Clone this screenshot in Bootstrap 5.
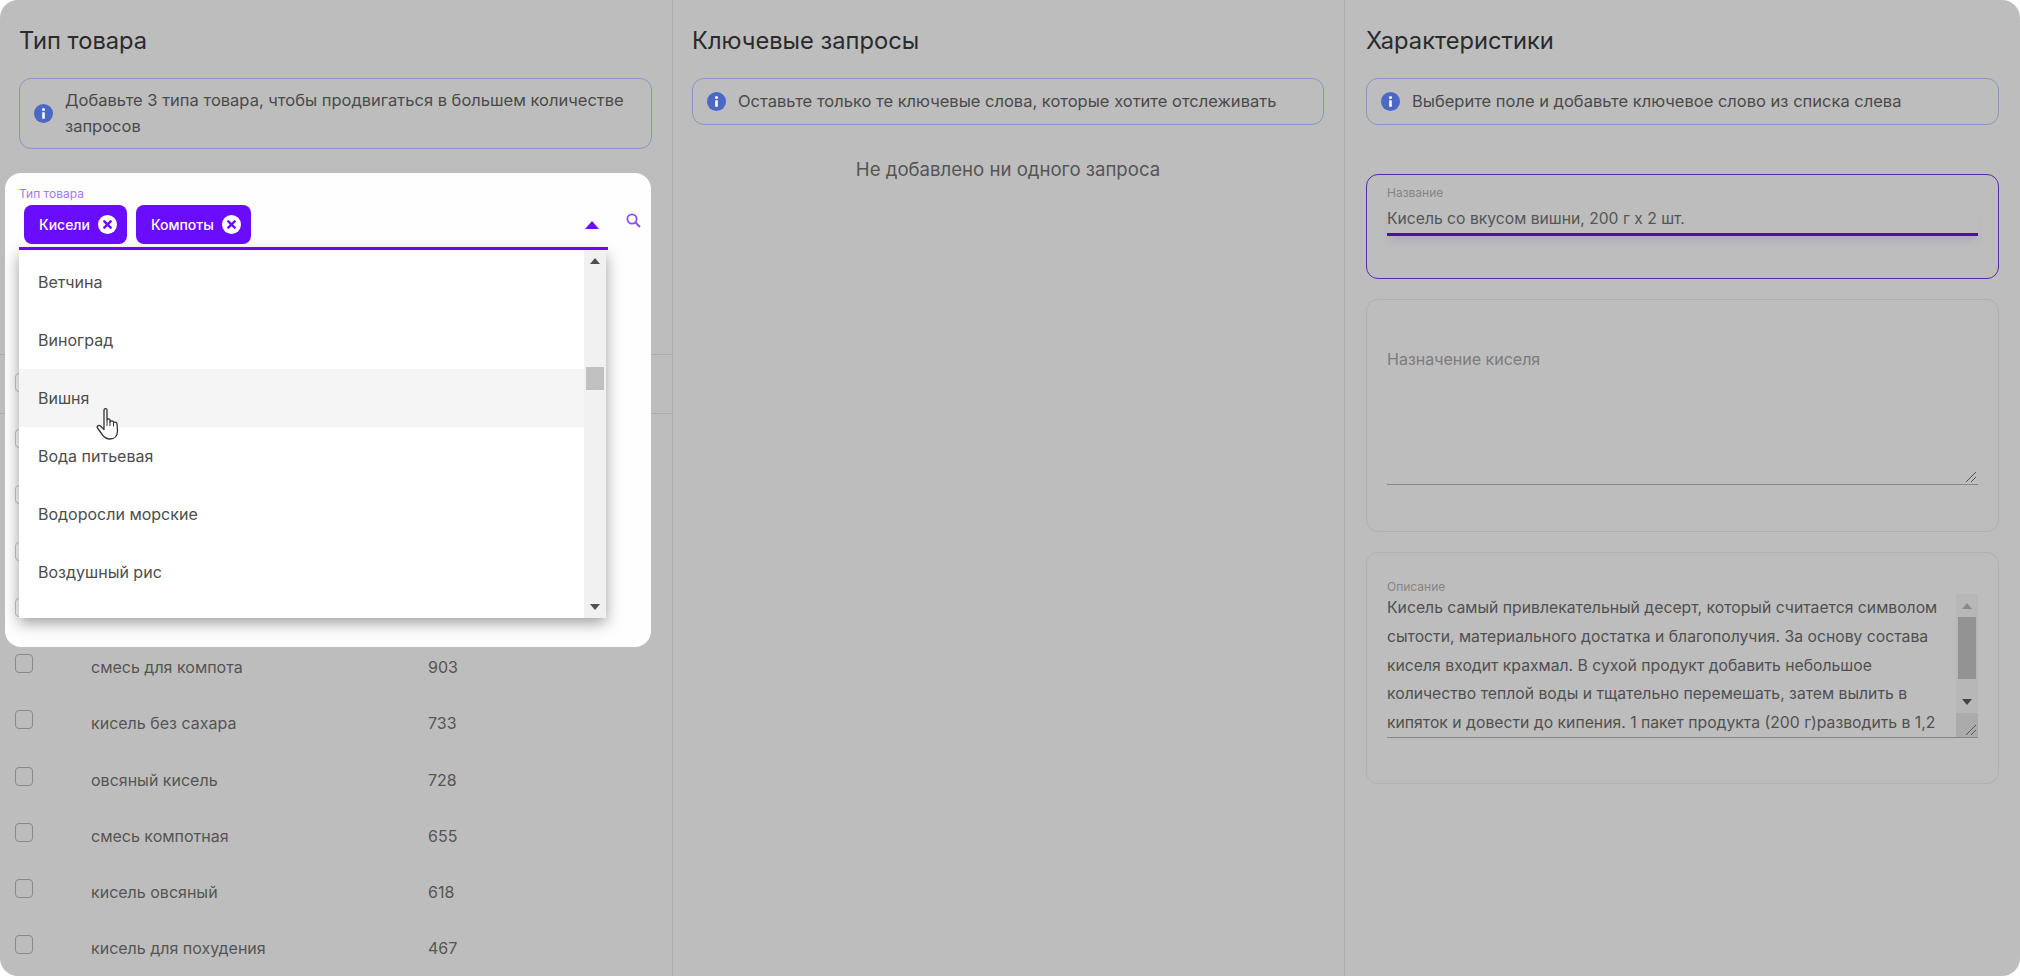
<!DOCTYPE html>
<html lang="ru">
<head>
  <meta charset="UTF-8">
  <title>Тип товара</title>
  <link href="https://cdn.jsdelivr.net/npm/bootstrap@5.3.0/dist/css/bootstrap.min.css" rel="stylesheet">
  <style>
    body {
      background: #fff;
      font-family: Inter, "Noto Sans", sans-serif;
      font-size: 16px;
      color: #4d4d4d;
      overflow: hidden;
    }

    .board {
      position: relative;
      height: 976px;
      background: #bdbdbd;
      border-radius: 18px;
      overflow: hidden;
    }

    .pane {
      height: 976px;
      padding: 26px 20px 0 19px;
      border-right: 1px solid #adadad;
    }

    .pane-left { flex: 0 0 673px; }
    .pane-mid { flex: 0 0 672px; }
    .pane-right { flex: 0 0 675px; padding: 26px 21px 0 21px; border-right: 0; }

    .pane-title {
      font-size: 23.7px;
      line-height: 30px;
      font-weight: 400;
      color: #2b2b2b;
      margin: 0 0 22px;
    }

    .hint-box {
      --bs-alert-margin-bottom: 0;
      min-height: 47px;
      padding: 8px 14px 9px;
      font-size: 16.5px;
      line-height: 26px;
      color: #4a4a4a;
      background: transparent;
      border: 1px solid #8797bd;
      border-radius: 12px;
    }

    .hint-icon { flex: 0 0 19px; width: 19px; height: 19px; }

    .empty-note {
      margin-top: 30px;
      font-size: 18.6px;
      line-height: 28px;
      text-align: center;
      color: #555;
    }

    /* keyword list behind the overlay */
    .kw-list { margin: 205px -20px 0 -19px; }
    .kw-head { height: 60px; padding: 18px 0 0 15px; border-top: 1px solid #adadad; border-bottom: 1px solid #adadad; }
    .kw-row { height: 56.25px; padding: 15px 0 0 15px; line-height: 26px; color: #555; }
    .kw-box.form-check-input {
      flex: 0 0 18px;
      width: 18px;
      height: 19px;
      margin: 0;
      background-color: transparent;
      border: 1px solid #8a8a8a;
      border-radius: 4px;
    }
    /* boxes that show through the white panel, the menu still covers them */
    .kw-box.kw-under { position: relative; z-index: 1; border-color: #c4c4c4; }
    .kw-name { width: 337px; margin-left: 58px; }

    /* white spotlight with the open select */
    .spot {
      position: absolute;
      left: 5px;
      top: 173px;
      width: 646px;
      height: 474px;
      padding: 14px 0 0 14px;
      background: rgba(255, 255, 255, .98);
      border-radius: 16px;
    }

    .spot-label { font-size: 12px; line-height: 14px; color: #a578f2; }

    .select-line {
      width: 589px;
      margin-top: 4px;
      padding: 0 0 3px 5px;
      border-bottom: 3px solid #6a0dff;
    }

    .tag-chip {
      height: 39px;
      padding: 0 10px 0 15px;
      gap: 8px;
      font-size: 14px;
      font-weight: 500;
      color: #fff;
      background: #6a0dff;
      border-radius: 8px;
    }

    .chip-x { width: 19px; height: 19px; }
    .chip-gap { gap: 9px; }
    .open-caret { width: 14px; height: 8px; margin-right: 9px; }
    .find-icon { position: absolute; left: 621px; top: 40px; width: 15px; height: 15px; }

    .pick-menu.dropdown-menu {
      left: 14px;
      top: 77px;
      width: 587px;
      height: 368px;
      padding: 0;
      margin: 0;
      border: 0;
      border-radius: 0;
      background: #fff;
      box-shadow: 0 5px 14px rgba(0, 0, 0, .38);
    }

    .pick-list { padding-top: 3px; }
    .pick-list .dropdown-item { height: 58px; padding: 16px 19px; line-height: 26px; color: #4d4d4d; }
    .pick-list .pick-hover { background: #f5f5f5; }

    .fake-bar { flex: 0 0 22px; width: 22px; background: #f1f1f1; }
    .bar-arrow { width: 10px; height: 6px; }
    .menu-thumb { position: absolute; right: 2px; top: 117px; width: 18px; height: 23px; background: #c1c1c1; }
    .hand-cursor { position: absolute; left: 77px; top: 157px; width: 25px; height: 33px; }

    /* characteristic fields */
    .spec-field {
      margin-top: 20px;
      padding: 0 20px;
      border: 1px solid #b0b0b0;
      border-radius: 12px;
    }

    .spec-title { height: 105px; margin-top: 49px; padding-top: 10px; border: 1.5px solid #5b2aa3; }
    .spec-goal { height: 233px; padding-top: 46px; }
    .spec-text { height: 232px; padding-top: 26px; }

    .spec-label { font-size: 12px; line-height: 15px; color: #858585; }

    .spec-value {
      margin-top: 6px;
      font-size: 15.7px;
      line-height: 26px;
      padding-bottom: 1px;
      color: #555;
      border-bottom: 3px solid #4a0fb0;
      box-shadow: 0 8px 8px -3px rgba(80, 40, 170, .12);
    }

    .goal-area {
      position: relative;
      height: 139px;
      line-height: 26px;
      color: #7c7c7c;
      border-bottom: 1px solid #858585;
    }

    .grip { position: absolute; right: 1px; bottom: 1px; width: 12px; height: 12px; }

    .desc-area {
      position: relative;
      height: 144px;
      font-size: 15.75px;
      line-height: 28.8px;
      color: #505050;
      white-space: nowrap;
      border-bottom: 1px solid #858585;
      overflow: hidden;
    }

    .desc-text { flex: 1 1 auto; min-width: 0; }
    .desc-bar { background: #b7b7b7; position: relative; }
    .desc-thumb { position: absolute; left: 2px; top: 23px; width: 18px; height: 62px; background: #939393; }
    .desc-arrow-up { position: absolute; left: 6px; top: 9px; }
    .desc-arrow-down { position: absolute; left: 6px; top: 105px; }
    .desc-corner { position: absolute; left: 0; bottom: 0; width: 22px; height: 24px; background: #ababab; }
  </style>
</head>
<body>
  <div class="board">
    <div class="row g-0 flex-nowrap">
      <div class="col pane pane-left">
        <h2 class="pane-title">Тип товара</h2>
        <div class="alert hint-box d-flex align-items-center gap-2 m-0" role="alert">
          <svg class="hint-icon me-1" viewBox="0 0 19 19"><circle cx="9.5" cy="9.5" r="9.5" fill="#4a68c5"/><circle cx="9.5" cy="5.6" r="1.5" fill="#fff"/><rect x="8.2" y="8.2" width="2.6" height="6.6" rx=".6" fill="#fff"/></svg>
          <div>Добавьте 3 типа товара, чтобы продвигаться в большем количестве запросов</div>
        </div>
        <div class="kw-list">
          <div class="kw-head"><input class="form-check-input kw-box kw-under" type="checkbox"></div>
          <div class="kw-row d-flex"><input class="form-check-input kw-box kw-under" type="checkbox"></div>
          <div class="kw-row d-flex"><input class="form-check-input kw-box kw-under" type="checkbox"></div>
          <div class="kw-row d-flex"><input class="form-check-input kw-box kw-under" type="checkbox"></div>
          <div class="kw-row d-flex"><input class="form-check-input kw-box kw-under" type="checkbox"></div>
          <div class="kw-row d-flex"><input class="form-check-input kw-box" type="checkbox"><span class="kw-name">смесь для компота</span><span>903</span></div>
          <div class="kw-row d-flex"><input class="form-check-input kw-box" type="checkbox"><span class="kw-name">кисель без сахара</span><span>733</span></div>
          <div class="kw-row d-flex"><input class="form-check-input kw-box" type="checkbox"><span class="kw-name">овсяный кисель</span><span>728</span></div>
          <div class="kw-row d-flex"><input class="form-check-input kw-box" type="checkbox"><span class="kw-name">смесь компотная</span><span>655</span></div>
          <div class="kw-row d-flex"><input class="form-check-input kw-box" type="checkbox"><span class="kw-name">кисель овсяный</span><span>618</span></div>
          <div class="kw-row d-flex"><input class="form-check-input kw-box" type="checkbox"><span class="kw-name">кисель для похудения</span><span>467</span></div>
        </div>
      </div>

      <div class="col pane pane-mid">
        <h2 class="pane-title">Ключевые запросы</h2>
        <div class="alert hint-box d-flex align-items-center gap-2 m-0" role="alert">
          <svg class="hint-icon me-1" viewBox="0 0 19 19"><circle cx="9.5" cy="9.5" r="9.5" fill="#4a68c5"/><circle cx="9.5" cy="5.6" r="1.5" fill="#fff"/><rect x="8.2" y="8.2" width="2.6" height="6.6" rx=".6" fill="#fff"/></svg>
          <div>Оставьте только те ключевые слова, которые хотите отслеживать</div>
        </div>
        <div class="empty-note">Не добавлено ни одного запроса</div>
      </div>

      <div class="col pane pane-right">
        <h2 class="pane-title">Характеристики</h2>
        <div class="alert hint-box d-flex align-items-center gap-2 m-0" role="alert">
          <svg class="hint-icon me-1" viewBox="0 0 19 19"><circle cx="9.5" cy="9.5" r="9.5" fill="#4a68c5"/><circle cx="9.5" cy="5.6" r="1.5" fill="#fff"/><rect x="8.2" y="8.2" width="2.6" height="6.6" rx=".6" fill="#fff"/></svg>
          <div>Выберите поле и добавьте ключевое слово из списка слева</div>
        </div>

        <div class="spec-field spec-title">
          <div class="spec-label">Название</div>
          <div class="spec-value">Кисель со вкусом вишни, 200 г х 2 шт.</div>
        </div>

        <div class="spec-field spec-goal">
          <div class="goal-area">
            Назначение киселя
            <svg class="grip" viewBox="0 0 12 12"><path d="M1 11 11 1M6 11l5-5" stroke="#555" fill="none"/></svg>
          </div>
        </div>

        <div class="spec-field spec-text">
          <div class="spec-label">Описание</div>
          <div class="desc-area d-flex">
            <div class="desc-text">Кисель самый привлекательный десерт, который считается символом<br>сытости, материального достатка и благополучия. За основу состава<br>киселя входит крахмал. В сухой продукт добавить небольшое<br>количество теплой воды и тщательно перемешать, затем вылить в<br>кипяток и довести до кипения. 1 пакет продукта (200 г)разводить в 1,2</div>
            <div class="fake-bar desc-bar">
              <svg class="bar-arrow desc-arrow-up" viewBox="0 0 10 6"><path d="M5 0 10 6H0z" fill="#8a8a8a"/></svg>
              <div class="desc-thumb"></div>
              <svg class="bar-arrow desc-arrow-down" viewBox="0 0 10 6"><path d="M0 0h10L5 6z" fill="#444"/></svg>
              <div class="desc-corner"><svg class="grip" viewBox="0 0 12 12"><path d="M1 11 11 1M6 11l5-5" stroke="#555" fill="none"/></svg></div>
            </div>
          </div>
        </div>
      </div>
    </div>

    <div class="spot">
      <div class="spot-label">Тип товара</div>
      <div class="select-line d-flex align-items-center">
        <div class="d-flex chip-gap flex-grow-1">
          <span class="tag-chip d-inline-flex align-items-center">Кисели
            <svg class="chip-x" viewBox="0 0 19 19"><circle cx="9.5" cy="9.5" r="9.5" fill="#fff"/><path d="M6.3 6.3l6.4 6.4M12.7 6.3l-6.4 6.4" stroke="#6a0dff" stroke-width="2.4" stroke-linecap="round"/></svg>
          </span>
          <span class="tag-chip d-inline-flex align-items-center">Компоты
            <svg class="chip-x" viewBox="0 0 19 19"><circle cx="9.5" cy="9.5" r="9.5" fill="#fff"/><path d="M6.3 6.3l6.4 6.4M12.7 6.3l-6.4 6.4" stroke="#6a0dff" stroke-width="2.4" stroke-linecap="round"/></svg>
          </span>
        </div>
        <svg class="open-caret" viewBox="0 0 14 8"><path d="M7 0 14 8H0z" fill="#6a0dff"/></svg>
      </div>
      <svg class="find-icon" viewBox="0 0 15 15"><circle cx="6" cy="6" r="4.6" fill="none" stroke="#8a50f0" stroke-width="1.8"/><path d="M9.5 9.5 14 14" stroke="#8a50f0" stroke-width="2"/></svg>

      <div class="dropdown-menu show pick-menu d-flex">
        <ul class="pick-list list-unstyled flex-grow-1 m-0">
          <li><a class="dropdown-item" href="#">Ветчина</a></li>
          <li><a class="dropdown-item" href="#">Виноград</a></li>
          <li><a class="dropdown-item pick-hover" href="#">Вишня</a></li>
          <li><a class="dropdown-item" href="#">Вода питьевая</a></li>
          <li><a class="dropdown-item" href="#">Водоросли морские</a></li>
          <li><a class="dropdown-item" href="#">Воздушный рис</a></li>
        </ul>
        <div class="fake-bar d-flex flex-column align-items-center justify-content-between py-2">
          <svg class="bar-arrow" viewBox="0 0 10 6"><path d="M5 0 10 6H0z" fill="#505050"/></svg>
          <svg class="bar-arrow" viewBox="0 0 10 6"><path d="M0 0h10L5 6z" fill="#505050"/></svg>
        </div>
        <div class="menu-thumb"></div>
        <svg class="hand-cursor" viewBox="0 0 25 33"><path d="M8 3C8 1.200 11 1.200 11 3v10c0-1.600 3-1.600 3 0v2c0-1.600 3.500-1.600 3.500 0v1c0-1.400 3.500-1.200 3.500 1l.5 7c0 5-3 8-7.500 8-4 0-5.500-1.500-7.500-4l-5-7c-1-1.500 1-3.500 3-2L8 22.500z" fill="#fff" stroke="#333" stroke-width="1.300" stroke-linejoin="round"/><path d="M11 13v6M14 15v4M17.500 16v3.500" stroke="#333" stroke-width="1"/></svg>
      </div>
    </div>
  </div>
  <script src="https://cdn.jsdelivr.net/npm/bootstrap@5.3.0/dist/js/bootstrap.bundle.min.js"></script>
</body>
</html>
